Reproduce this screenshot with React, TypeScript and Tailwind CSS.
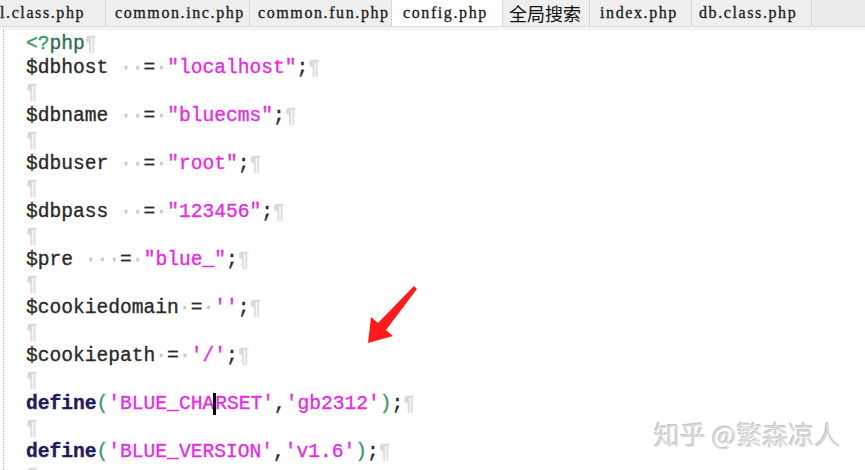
import React from "react";

type Tok = [string, string];

const C = {
  v: "text-[#2a2a2a]",
  s: "text-[#e22ee0]",
  d: "text-[#c9c9c9]",
  k: "text-[#1c1c5c] font-bold",
  p: "text-[#3a9a6a]",
  g: "text-[#2f6f4f]",
};

const lines: (Tok[] | null)[] = [
  [["<?", C.p], ["php", C.g]],
  [["$dbhost", C.v], [" ", C.d], ["··", C.d], ["=", C.v], ["·", C.d], ['"localhost"', C.s], [";", C.v]],
  null,
  [["$dbname", C.v], [" ", C.d], ["··", C.d], ["=", C.v], ["·", C.d], ['"bluecms"', C.s], [";", C.v]],
  null,
  [["$dbuser", C.v], [" ", C.d], ["··", C.d], ["=", C.v], ["·", C.d], ['"root"', C.s], [";", C.v]],
  null,
  [["$dbpass", C.v], [" ", C.d], ["··", C.d], ["=", C.v], ["·", C.d], ['"123456"', C.s], [";", C.v]],
  null,
  [["$pre", C.v], [" ", C.d], ["···", C.d], ["=", C.v], ["·", C.d], ['"blue_"', C.s], [";", C.v]],
  null,
  [["$cookiedomain", C.v], ["·", C.d], ["=", C.v], ["·", C.d], ["''", C.s], [";", C.v]],
  null,
  [["$cookiepath", C.v], ["·", C.d], ["=", C.v], ["·", C.d], ["'/'", C.s], [";", C.v]],
  null,
  [["define", C.k], ["(", C.p], ["'BLUE_CHA", C.s], ["|CURSOR|", ""], ["RSET'", C.s], [",", C.v], ["'gb2312'", C.s], [")", C.p], [";", C.v]],
  null,
  [["define", C.k], ["(", C.p], ["'BLUE_VERSION'", C.s], [",", C.v], ["'v1.6'", C.s], [")", C.p], [";", C.v]],
  null,
];

const tabs = [
  { t: "l.class.php", w: "w-[106px]", pl: "pl-0" },
  { t: "common.inc.php", w: "w-[144px]", pl: "pl-[9px]" },
  { t: "common.fun.php", w: "w-[142px]", pl: "pl-[8px]" },
  { t: "config.php", w: "w-[111px]", pl: "pl-[11px]", active: true },
  { t: "全局搜索", w: "w-[87px]", pl: "pl-[6px]", cjk: true },
  { t: "index.php", w: "w-[102px]", pl: "pl-[10px]" },
  { t: "db.class.php", w: "w-[120px]", pl: "pl-[7px]" },
];

export default function App() {
  return (
    <div className="relative w-[865px] h-[470px] overflow-hidden bg-white">
      <div className="flex h-[27px] bg-[#ececec] border-b border-[#dcdcdc]">
        {tabs.map((tb, i) => (
          <div
            key={i}
            className={`${tb.w} ${tb.pl} h-full flex items-center border-r border-[#d6d6d6] ${
              tb.active ? "bg-white h-[28px]" : "bg-[#efefef]"
            }`}
          >
            {tb.cjk ? (
              <span className="text-[18px] text-[#111] font-['Noto_Sans_CJK_SC',sans-serif]">{tb.t}</span>
            ) : (
              <span className="text-[16px] tracking-[1.6px] text-[#1a1a1a] font-['Liberation_Serif',serif] [-webkit-text-stroke:0.3px_#1a1a1a]">
                {tb.t}
              </span>
            )}
          </div>
        ))}
        <div className="flex-1" />
      </div>
      <div className="h-[3px] bg-[#f4f4f4]" />
      <div className="flex">
        <div className="ml-[3px] w-0 border-l border-dotted border-[#b0b0b0] h-[440px]" />
        <div className="pl-[22px] pt-[2px] text-[19.6px] leading-[24px] whitespace-pre font-['Liberation_Mono','Courier_New',monospace] [-webkit-text-stroke:0.35px_currentColor]">
          {lines.map((ln, i) => (
            <div key={i} className="h-[24px]">
              {ln &&
                ln.map((tk, j) =>
                  tk[0] === "|CURSOR|" ? (
                    <span
                      key={j}
                      className="inline-block w-[3px] h-[22px] bg-black align-middle -mx-[1px] relative z-10"
                    />
                  ) : (
                    <span key={j} className={tk[1]}>
                      {tk[0]}
                    </span>
                  )
                )}
              <span className="text-[#dadada]">¶</span>
            </div>
          ))}
        </div>
      </div>
      <svg className="absolute left-0 top-0" width="865" height="470">
        <polygon
          points="368,343 371,317 378,323 414,286 417,289 386,330 393,336"
          fill="#ff1b1b"
        />
      </svg>
      <div className="absolute left-[654px] top-[418px] text-[26px] leading-[32px] text-[#dadada] font-['Noto_Sans_CJK_SC',sans-serif] [text-shadow:1px_1px_0_#ffffff,-1px_-1px_0_#c4c4c4]">
        知乎 @繁森凉人
      </div>
    </div>
  );
}
